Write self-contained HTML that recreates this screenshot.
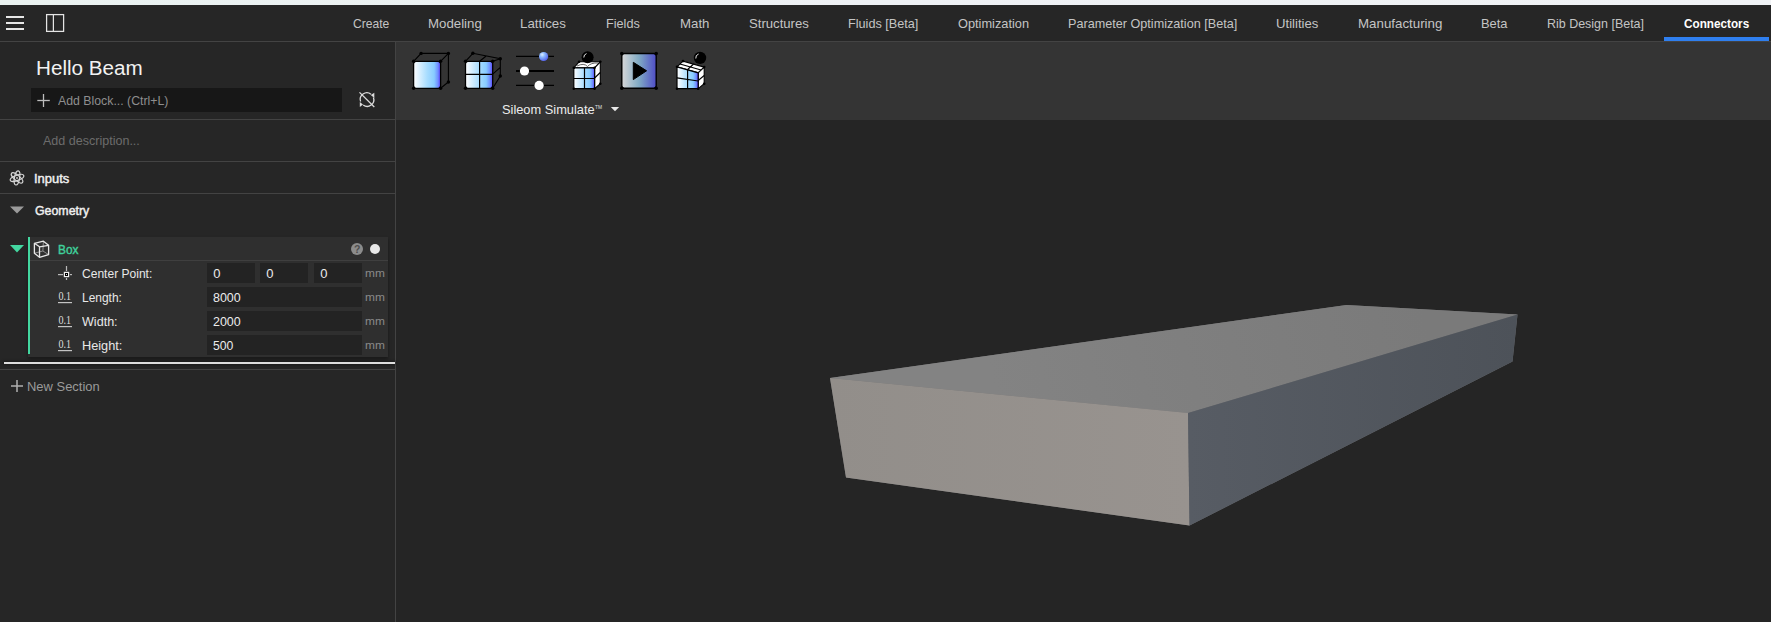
<!DOCTYPE html>
<html><head><meta charset="utf-8">
<style>
html,body{margin:0;padding:0;width:1771px;height:622px;overflow:hidden;background:#262626;}
body{position:relative;font-family:"Liberation Sans",sans-serif;}
.r{position:absolute;}
.tx{position:absolute;white-space:nowrap;line-height:normal;transform-origin:0 0;font-family:"Liberation Sans",sans-serif;}
svg{position:absolute;left:0;top:0;}
</style></head><body>
<!-- top strip -->
<div class="r" style="left:0;top:0;width:1771px;height:5px;background:linear-gradient(90deg,#eaf2f1,#eef1f4 50%,#f0f2f5)"></div>
<!-- header -->
<div class="r" style="left:0;top:5px;width:1771px;height:36px;background:#262626"></div>
<div class="r" style="left:0;top:41px;width:1771px;height:1px;background:#434343"></div>
<!-- active tab underline -->
<div class="r" style="left:1664px;top:37px;width:105px;height:4px;background:#2f7fef"></div>
<!-- toolbar -->
<div class="r" style="left:396px;top:42px;width:1375px;height:78px;background:#343434"></div>
<!-- viewport -->
<div class="r" style="left:396px;top:120px;width:1375px;height:502px;background:#252525"></div>
<!-- panel divider -->
<div class="r" style="left:395px;top:42px;width:1px;height:580px;background:#434343"></div>
<!-- left panel lines -->
<div class="r" style="left:0;top:119px;width:395px;height:1px;background:#434343"></div>
<div class="r" style="left:0;top:161px;width:395px;height:1px;background:#434343"></div>
<div class="r" style="left:0;top:193px;width:395px;height:1px;background:#434343"></div>
<div class="r" style="left:0;top:369px;width:395px;height:1px;background:#434343"></div>
<!-- add block input -->
<div class="r" style="left:31px;top:88px;width:311px;height:24px;background:#171717"></div>
<!-- box block -->
<div class="r" style="left:28px;top:237px;width:360px;height:120px;background:#2f2f2f;box-shadow:0 2px 3px rgba(0,0,0,0.35)"></div>
<div class="r" style="left:28px;top:237px;width:2px;height:117px;background:#43d7a0"></div>
<div class="r" style="left:30px;top:260px;width:358px;height:1px;background:#3f3f3f"></div>
<!-- inputs -->
<div class="r" style="left:207px;top:263px;width:48px;height:20px;background:#232323"></div>
<div class="r" style="left:260px;top:263px;width:48px;height:20px;background:#232323"></div>
<div class="r" style="left:314px;top:263px;width:48px;height:20px;background:#232323"></div>
<div class="r" style="left:207px;top:287px;width:155px;height:20px;background:#232323"></div>
<div class="r" style="left:207px;top:311px;width:155px;height:20px;background:#232323"></div>
<div class="r" style="left:207px;top:335px;width:155px;height:20px;background:#232323"></div>
<!-- white line -->
<div class="r" style="left:4px;top:362px;width:391px;height:2px;background:#dedede;box-shadow:0 0 3px 1px rgba(0,0,0,0.3)"></div>

<svg width="1771" height="622" viewBox="0 0 1771 622">
<defs>
 <linearGradient id="gface" x1="0" y1="0" x2="1" y2="0">
  <stop offset="0" stop-color="#ffffff"/>
  <stop offset="0.5" stop-color="#a8ddff"/>
  <stop offset="0.76" stop-color="#88ccff"/>
  <stop offset="0.9" stop-color="#7090ff"/>
  <stop offset="1" stop-color="#5a3cff"/>
 </linearGradient>
 <linearGradient id="gplay" x1="0" y1="0" x2="1" y2="0">
  <stop offset="0" stop-color="#d8d8d8"/>
  <stop offset="0.5" stop-color="#80aac4"/>
  <stop offset="1" stop-color="#4f4cc8"/>
 </linearGradient>
 <radialGradient id="gknob" cx="0.35" cy="0.3" r="0.8">
  <stop offset="0" stop-color="#ddeeff"/>
  <stop offset="0.35" stop-color="#8ab8ff"/>
  <stop offset="1" stop-color="#4a52e8"/>
 </radialGradient>
</defs>
<!-- hamburger -->
<g fill="#e6e6e6">
 <rect x="6" y="16" width="18" height="2"/>
 <rect x="6" y="22" width="18" height="2"/>
 <rect x="6" y="28" width="18" height="2"/>
</g>
<!-- panel icon -->
<g fill="none" stroke="#e4e4e4" stroke-width="1.25">
 <rect x="46.6" y="14.6" width="17" height="16.8"/>
 <line x1="53.4" y1="14.6" x2="53.4" y2="31.4"/>
</g>
<!-- add block plus -->
<g stroke="#bdbdbd" stroke-width="1.3">
 <line x1="37.3" y1="100.5" x2="49.8" y2="100.5"/>
 <line x1="43.5" y1="94" x2="43.5" y2="107"/>
</g>
<!-- rotate-off icon -->
<g fill="none" stroke="#dcdcdc" stroke-width="1.3">
 <path d="M371 94.2 A6.6 6.6 0 0 0 360.6 101.5"/>
 <path d="M363.2 105 A6.6 6.6 0 0 0 373.4 97.5"/>
 <line x1="359.5" y1="92.4" x2="374.3" y2="107"/>
</g>
<g fill="#dcdcdc">
 <path d="M374.3 92.7 L374.3 98 L370.8 95.1 Z"/>
 <path d="M359.8 102 L359.8 106.9 L363 104.6 Z"/>
</g>
<!-- inputs atom icon -->
<g fill="none" stroke="#d6d6d6" stroke-width="1.2">
 <ellipse cx="17" cy="177.9" rx="7.2" ry="2.6" transform="rotate(100 17 177.9)"/>
 <ellipse cx="17" cy="177.9" rx="7.2" ry="2.6" transform="rotate(40 17 177.9)"/>
 <ellipse cx="17" cy="177.9" rx="7.2" ry="2.6" transform="rotate(-20 17 177.9)"/>
</g>
<circle cx="17" cy="177.9" r="1" fill="#bdbdbd"/>
<!-- geometry triangle -->
<path d="M10 206.5 L24 206.5 L17 213.5 Z" fill="#9a9a9a"/>
<!-- box green triangle -->
<path d="M10 245 L24 245 L17 252.5 Z" fill="#43d7a0"/>
<!-- box cube icon -->
<g fill="none" stroke="#8c8c8c" stroke-width="1">
 <path d="M42.9 251 L43.4 241.2 M42.9 251 L34.4 253.2 M42.9 251 L48.6 254.6"/>
</g>
<g fill="none" stroke="#e6e6e6" stroke-width="1.3" stroke-linejoin="round">
 <path d="M34.4 243.3 L43.4 241.2 L48.6 245.3 L48.6 254.6 L39.5 257.3 L34.4 253.2 Z"/>
 <path d="M34.4 243.3 L39.5 246.8 L48.6 245.3 M39.5 246.8 L39.5 257.3"/>
</g>
<!-- help & dot -->
<circle cx="357" cy="249" r="6" fill="#8c8c8c"/>
<text x="357.2" y="253" font-family="Liberation Sans" font-weight="700" font-size="10.5" fill="#4e4e4e" text-anchor="middle">?</text>
<circle cx="375" cy="249" r="5" fill="#e8e8e8"/>
<!-- center point icon -->
<g fill="#b8b8b8">
 <rect x="58" y="274" width="5" height="1.2"/>
 <rect x="70" y="274" width="2" height="1.2"/>
 <rect x="65.9" y="266" width="1.2" height="5"/>
 <rect x="65.9" y="278" width="1.2" height="2"/>
</g>
<rect x="64.4" y="272.4" width="4.2" height="4.2" fill="#000" stroke="#f2f2f2" stroke-width="1.2"/>
<rect x="66" y="274" width="1" height="1" fill="#dddddd"/>
<!-- 0.1 icons -->
<g font-family="Liberation Serif" font-size="12" fill="#dedede">
 <text x="58.5" y="300" textLength="12.6" lengthAdjust="spacingAndGlyphs">0.1</text>
 <text x="58.5" y="324" textLength="12.6" lengthAdjust="spacingAndGlyphs">0.1</text>
 <text x="58.5" y="348" textLength="12.6" lengthAdjust="spacingAndGlyphs">0.1</text>
</g>
<g fill="#c4c4c4">
 <rect x="58" y="302" width="14" height="1.2"/>
 <rect x="58" y="326" width="14" height="1.2"/>
 <rect x="58" y="350" width="14" height="1.2"/>
</g>
<!-- new section plus -->
<g stroke="#b0b0b0" stroke-width="1.5">
 <line x1="11" y1="386" x2="23" y2="386"/>
 <line x1="17" y1="380" x2="17" y2="392"/>
</g>
<!-- sim dropdown triangle -->
<path d="M610.8 107 L619.2 107 L615 111.3 Z" fill="#e8e8e8"/>

<!-- ICON 1 cube -->
<g>
 <rect x="413.6" y="61.3" width="27" height="27" rx="2.5" fill="url(#gface)" stroke="#000" stroke-width="1.3"/>
 <g stroke="#000" stroke-width="1.1" fill="none">
  <path d="M413.6 61.3 L421.1 53.4 L448.4 53.4 L448.4 82 L440.6 88.3 M440.6 61.3 L448.4 53.4"/>
 </g>
 <g fill="#000">
  <circle cx="413.6" cy="61.3" r="1.7"/><circle cx="440.6" cy="61.3" r="1.7"/>
  <circle cx="413.6" cy="88.3" r="1.7"/><circle cx="440.6" cy="88.3" r="1.7"/>
  <circle cx="421.1" cy="53.4" r="1.7"/><circle cx="448.4" cy="53.4" r="1.7"/>
  <circle cx="448.4" cy="82" r="1.7"/>
 </g>
</g>
<!-- ICON 2 grid cube -->
<g>
 <rect x="465.5" y="61.3" width="27.2" height="27" rx="2.5" fill="url(#gface)" stroke="#000" stroke-width="1.3"/>
 <g stroke="#000" stroke-width="1.1" fill="none">
  <path d="M465.5 61.3 L472.9 53.3 L500.3 58.7 L500.3 76 L492.7 88.3 M492.7 61.3 L500.3 58.7 M492.7 74.2 L500.3 67.4 M479.6 61.3 L485.9 56.2"/>
  <path d="M479.6 61.3 L479.6 88.3 M465.5 74.3 L492.7 74.3" stroke-width="1.2"/>
 </g>
 <g fill="#000">
  <circle cx="465.5" cy="61.3" r="1.7"/><circle cx="492.7" cy="61.3" r="1.7"/>
  <circle cx="465.5" cy="88.3" r="1.7"/><circle cx="492.7" cy="88.3" r="1.7"/>
  <circle cx="472.9" cy="53.3" r="1.7"/><circle cx="500.3" cy="58.7" r="1.7"/>
  <circle cx="500.3" cy="76" r="1.7"/>
 </g>
</g>
<!-- ICON 3 sliders -->
<g stroke="#000" fill="none">
 <line x1="516" y1="56.4" x2="554" y2="56.4" stroke-width="1.2"/>
 <line x1="516" y1="70.9" x2="554" y2="70.9" stroke-width="2"/>
 <line x1="516" y1="85.4" x2="554" y2="85.4" stroke-width="1.2"/>
</g>
<circle cx="543.6" cy="56.5" r="4.6" fill="url(#gknob)"/>
<circle cx="524.5" cy="71" r="4.6" fill="#ffffff"/>
<circle cx="539.1" cy="85.4" r="4.6" fill="#ffffff"/>
<!-- ICON 4 grid cube w/ ball -->
<g>
 <path d="M573.8 67.8 L579.1 61.8 L600.3 61.8 L594.6 67.8 Z" fill="#fff" stroke="#000" stroke-width="1.1"/>
 <path d="M594.6 67.8 L600.3 61.8 L600.3 83.7 L594.6 88.7 Z" fill="#fff" stroke="#000" stroke-width="1.1"/>
 <path d="M594.6 78 L600.3 72.5" stroke="#000" stroke-width="1.1"/>
 <path d="M577 66 Q584 62.5 587.5 66.5 Q591 62.5 598 63" fill="none" stroke="#555" stroke-width="0.9"/>
 <rect x="573.8" y="67.8" width="20.8" height="20.9" rx="1.5" fill="url(#gface)" stroke="#000" stroke-width="1.2"/>
 <path d="M584.5 67.8 L584.5 88.7 M573.8 78.5 L594.6 78.5" stroke="#000" stroke-width="1.2"/>
 <circle cx="587.6" cy="57.2" r="6" fill="#000"/>
 <path d="M583.8 57.5 A4 4 0 0 1 586.5 53.6" stroke="#fff" stroke-width="0.9" fill="none"/>
 <g fill="#000">
  <circle cx="573.8" cy="67.8" r="1.3"/><circle cx="594.6" cy="67.8" r="1.3"/>
  <circle cx="573.8" cy="88.7" r="1.3"/><circle cx="594.6" cy="88.7" r="1.3"/>
  <circle cx="579.1" cy="61.8" r="1.3"/><circle cx="600.3" cy="61.8" r="1.3"/>
  <circle cx="600.3" cy="83.7" r="1.3"/>
 </g>
</g>
<!-- ICON 5 play -->
<g>
 <rect x="621.8" y="53.5" width="34.4" height="34.8" rx="2.5" fill="url(#gplay)" stroke="#000" stroke-width="1.4"/>
 <path d="M633.3 62.3 L646.6 70.8 L633.3 79.6 Z" fill="#000" stroke="#000" stroke-width="1" stroke-linejoin="round"/>
 <g fill="#000">
  <circle cx="621.8" cy="53.5" r="1.8"/><circle cx="656.2" cy="53.5" r="1.8"/>
  <circle cx="621.8" cy="88.3" r="1.8"/><circle cx="656.2" cy="88.3" r="1.8"/>
 </g>
</g>
<!-- ICON 6 -->
<g>
 <path d="M677 66.8 L683 61.1 L704.2 67.1 L698.2 72.8 Z" fill="#fff" stroke="#000" stroke-width="1.1"/>
 <path d="M687.6 69.5 L693.6 64 M680 64 L701 70" stroke="#000" stroke-width="1.1"/>
 <path d="M698.2 72.8 L704.2 67.1 L704.2 83.8 L698.2 88.7 Z" fill="#fff" stroke="#000" stroke-width="1.1"/>
 <path d="M698.2 80.5 L704.2 75.5" stroke="#000" stroke-width="1.1"/>
 <path d="M677 66.8 L698.2 72.8 L698.2 88.7 L677 88.7 Z" fill="url(#gface)" stroke="#000" stroke-width="1.2"/>
 <path d="M687.6 69.8 L687.6 88.7 M677 77.8 L698.2 81" stroke="#000" stroke-width="1.2"/>
 <circle cx="700" cy="57.9" r="6.2" fill="#000"/>
 <path d="M695.8 58.5 A4.2 4.2 0 0 1 698.6 54" stroke="#fff" stroke-width="0.9" fill="none"/>
 <g fill="#000">
  <circle cx="677" cy="66.8" r="1.3"/><circle cx="683" cy="61.1" r="1.3"/>
  <circle cx="677" cy="88.7" r="1.3"/><circle cx="698.2" cy="88.7" r="1.3"/>
  <circle cx="704.2" cy="67.1" r="1.3"/><circle cx="704.2" cy="83.8" r="1.3"/>
 </g>
</g>
<!-- tm -->
<text x="595" y="108.6" font-family="Liberation Sans" font-size="5.6" fill="#e0e0e0" textLength="7" lengthAdjust="spacingAndGlyphs">TM</text>

<!-- 3D beam -->
<defs>
 <linearGradient id="gfront" x1="830" y1="0" x2="1189" y2="0" gradientUnits="userSpaceOnUse">
  <stop offset="0" stop-color="#928e8a"/>
  <stop offset="1" stop-color="#98938f"/>
 </linearGradient>
 <linearGradient id="gtop" x1="1420" y1="300" x2="1000" y2="410" gradientUnits="userSpaceOnUse">
  <stop offset="0" stop-color="#7a7a7a"/>
  <stop offset="1" stop-color="#838383"/>
 </linearGradient>
 <linearGradient id="gright" x1="1189" y1="0" x2="1517" y2="0" gradientUnits="userSpaceOnUse">
  <stop offset="0" stop-color="#575c64"/>
  <stop offset="1" stop-color="#4d5259"/>
 </linearGradient>
</defs>
<path d="M830 378 L1346.5 305 L1517.5 314.5 L1512.5 361.5 L1189.5 525.5 L846 477.5 Z" fill="#6d6d6f"/>
<path d="M830 378 L1346.5 305 L1517.5 314.5 L1188 413 Z" fill="url(#gtop)"/>
<path d="M830 378 L1188 413 L1189.5 525.5 L846 477.5 Z" fill="url(#gfront)"/>
<path d="M1188 413 L1517.5 314.5 L1512.5 361.5 L1189.5 525.5 Z" fill="url(#gright)"/>
</svg>
<div class="tx" style="left:352.50px;top:16px;font-size:13px;font-weight:400;color:#c4c4c4;transform:scaleX(0.9308)">Create</div>
<div class="tx" style="left:428.18px;top:16px;font-size:13px;font-weight:400;color:#c4c4c4;transform:scaleX(1.0196)">Modeling</div>
<div class="tx" style="left:520.28px;top:16px;font-size:13px;font-weight:400;color:#c4c4c4;transform:scaleX(1.0227)">Lattices</div>
<div class="tx" style="left:606.33px;top:16px;font-size:13px;font-weight:400;color:#c4c4c4;transform:scaleX(0.9735)">Fields</div>
<div class="tx" style="left:680.48px;top:16px;font-size:13px;font-weight:400;color:#c4c4c4;transform:scaleX(1.0179)">Math</div>
<div class="tx" style="left:748.89px;top:16px;font-size:13px;font-weight:400;color:#c4c4c4;transform:scaleX(1.0103)">Structures</div>
<div class="tx" style="left:848.23px;top:16px;font-size:13px;font-weight:400;color:#c4c4c4;transform:scaleX(0.9732)">Fluids [Beta]</div>
<div class="tx" style="left:958.20px;top:16px;font-size:13px;font-weight:400;color:#c4c4c4;transform:scaleX(0.9833)">Optimization</div>
<div class="tx" style="left:1068.23px;top:16px;font-size:13px;font-weight:400;color:#c4c4c4;transform:scaleX(0.9717)">Parameter Optimization [Beta]</div>
<div class="tx" style="left:1275.99px;top:16px;font-size:13px;font-weight:400;color:#c4c4c4;transform:scaleX(1.0098)">Utilities</div>
<div class="tx" style="left:1358.18px;top:16px;font-size:13px;font-weight:400;color:#c4c4c4;transform:scaleX(1.0235)">Manufacturing</div>
<div class="tx" style="left:1481.01px;top:16px;font-size:13px;font-weight:400;color:#c4c4c4;transform:scaleX(0.9923)">Beta</div>
<div class="tx" style="left:1547.34px;top:16px;font-size:13px;font-weight:400;color:#c4c4c4;transform:scaleX(0.9590)">Rib Design [Beta]</div>
<div class="tx" style="left:1683.50px;top:16px;font-size:13px;font-weight:700;color:#ffffff;transform:scaleX(0.9028)">Connectors</div>
<div class="tx" style="left:36.27px;top:57px;font-size:20px;font-weight:400;color:#f2f2f2;transform:scaleX(1.0333)">Hello Beam</div>
<div class="tx" style="left:58.40px;top:93px;font-size:13px;font-weight:400;color:#8e8e8e;transform:scaleX(0.9466)">Add Block... (Ctrl+L)</div>
<div class="tx" style="left:42.60px;top:133px;font-size:13px;font-weight:400;color:#6c6c6c;transform:scaleX(0.9640)">Add description...</div>
<div class="tx" style="left:33.60px;top:171px;font-size:13px;font-weight:400;-webkit-text-stroke:0.45px currentColor;color:#f0f0f0;transform:scaleX(0.9971)">Inputs</div>
<div class="tx" style="left:34.60px;top:203px;font-size:13px;font-weight:400;-webkit-text-stroke:0.45px currentColor;color:#f0f0f0;transform:scaleX(0.9500)">Geometry</div>
<div class="tx" style="left:58.00px;top:242px;font-size:13px;font-weight:400;-webkit-text-stroke:0.45px currentColor;color:#3fd09b;transform:scaleX(0.9087)">Box</div>
<div class="tx" style="left:82.20px;top:266px;font-size:13px;font-weight:400;color:#e8e8e8;transform:scaleX(0.9267)">Center Point:</div>
<div class="tx" style="left:82.08px;top:290px;font-size:13px;font-weight:400;color:#e8e8e8;transform:scaleX(0.9190)">Length:</div>
<div class="tx" style="left:82.20px;top:314px;font-size:13px;font-weight:400;color:#e8e8e8;transform:scaleX(0.9667)">Width:</div>
<div class="tx" style="left:81.52px;top:338px;font-size:13px;font-weight:400;color:#e8e8e8;transform:scaleX(0.9795)">Height:</div>
<div class="tx" style="left:213.30px;top:266px;font-size:13px;font-weight:400;color:#ececec;transform:scaleX(1.0000)">0</div>
<div class="tx" style="left:266.30px;top:266px;font-size:13px;font-weight:400;color:#ececec;transform:scaleX(1.0000)">0</div>
<div class="tx" style="left:320.30px;top:266px;font-size:13px;font-weight:400;color:#ececec;transform:scaleX(1.0000)">0</div>
<div class="tx" style="left:213.30px;top:290px;font-size:13px;font-weight:400;color:#ececec;transform:scaleX(0.9586)">8000</div>
<div class="tx" style="left:213.30px;top:314px;font-size:13px;font-weight:400;color:#ececec;transform:scaleX(0.9586)">2000</div>
<div class="tx" style="left:213.30px;top:338px;font-size:13px;font-weight:400;color:#ececec;transform:scaleX(0.9409)">500</div>
<div class="tx" style="left:364.90px;top:267px;font-size:11px;font-weight:400;color:#8a8a8a;transform:scaleX(1.0833)">mm</div>
<div class="tx" style="left:364.90px;top:291px;font-size:11px;font-weight:400;color:#8a8a8a;transform:scaleX(1.0833)">mm</div>
<div class="tx" style="left:364.90px;top:315px;font-size:11px;font-weight:400;color:#8a8a8a;transform:scaleX(1.0833)">mm</div>
<div class="tx" style="left:364.90px;top:339px;font-size:11px;font-weight:400;color:#8a8a8a;transform:scaleX(1.0833)">mm</div>
<div class="tx" style="left:501.91px;top:102px;font-size:13px;font-weight:400;color:#ececec;transform:scaleX(0.9860)">Sileom Simulate</div>
<div class="tx" style="left:27.40px;top:379px;font-size:13px;font-weight:400;color:#9a9a9a;transform:scaleX(0.9958)">New Section</div>
</body></html>
